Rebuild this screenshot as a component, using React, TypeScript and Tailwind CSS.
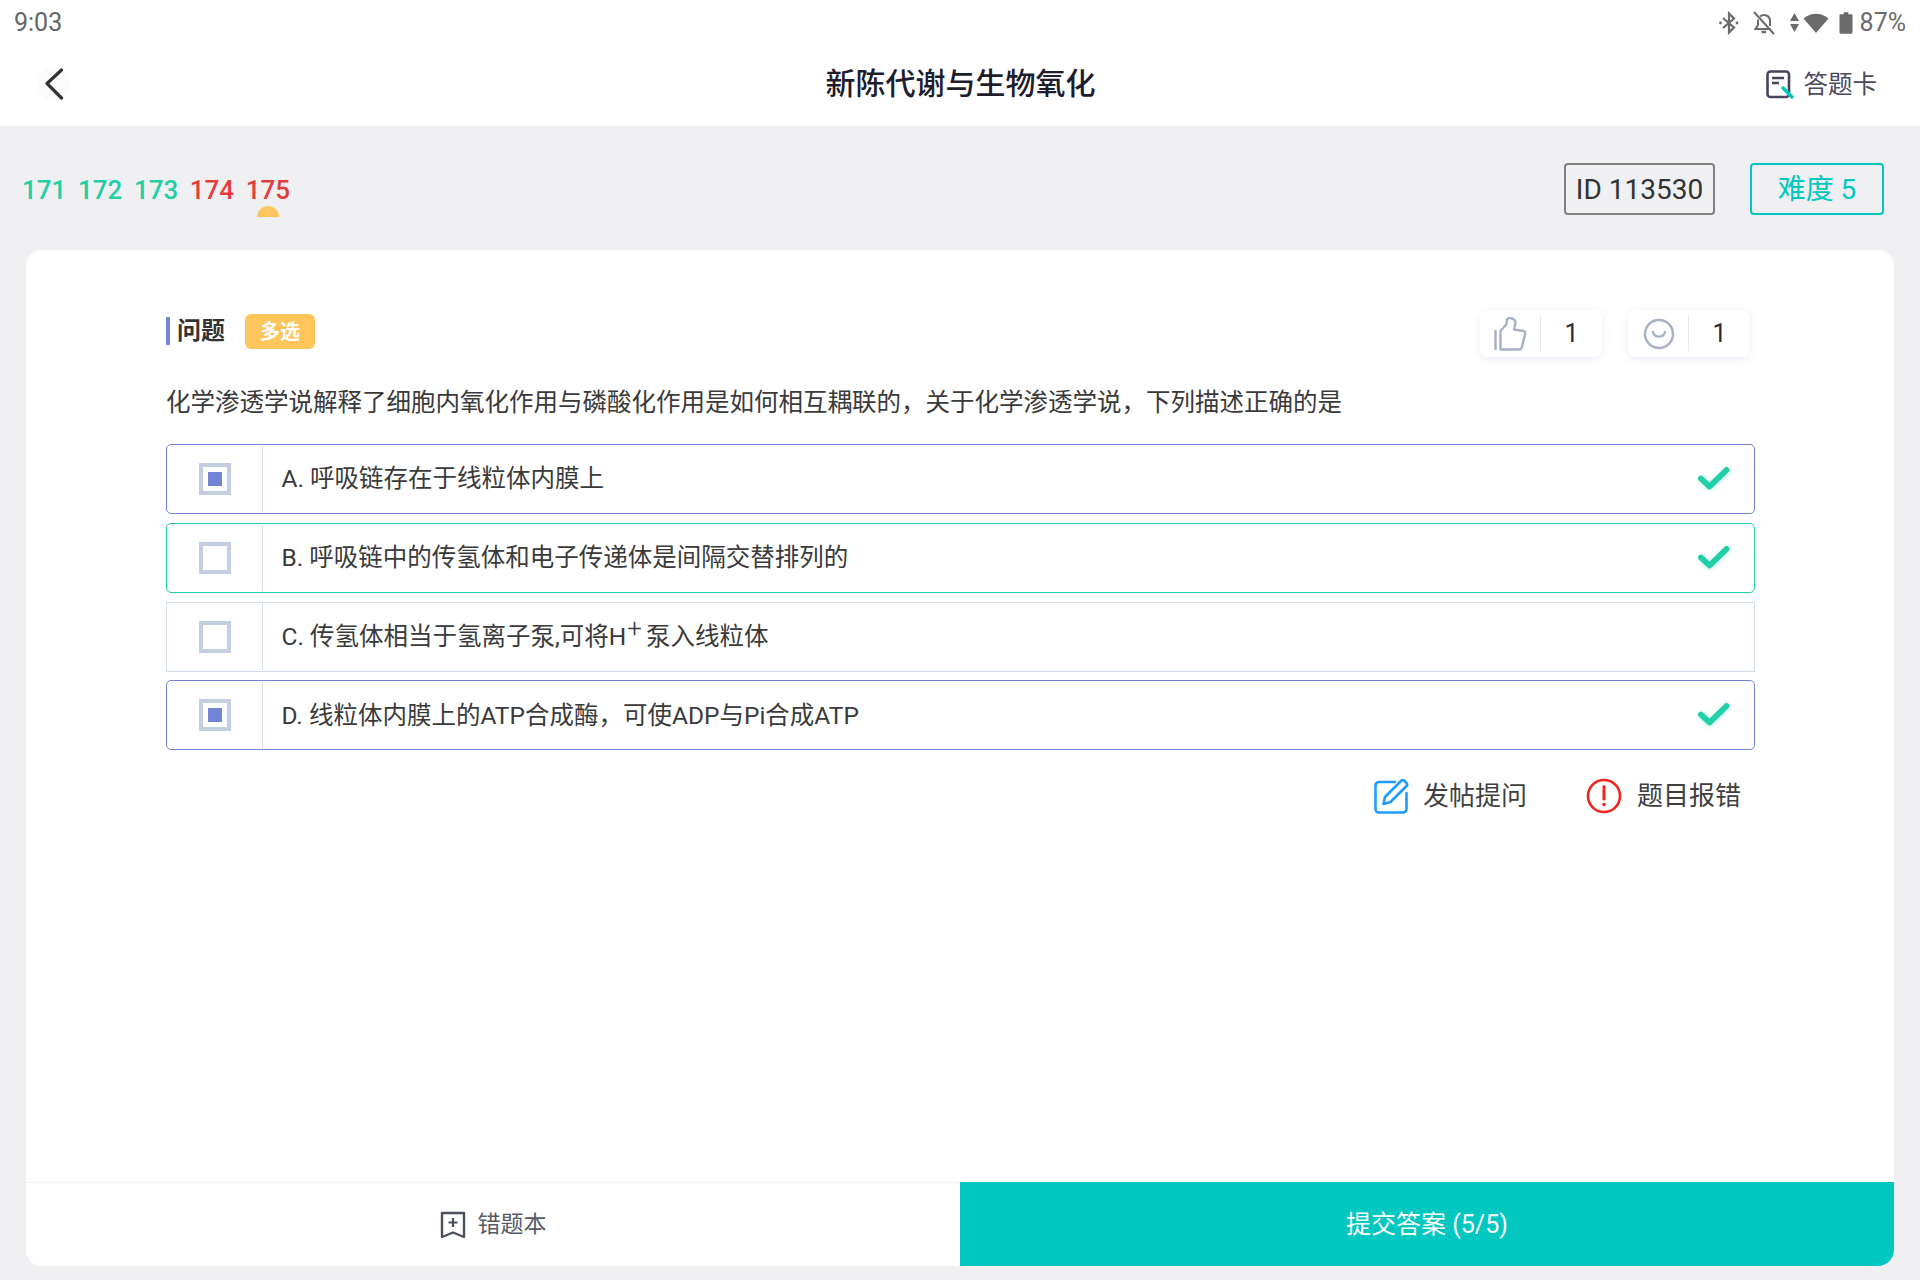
import React from "react";

const font = { fontFamily: 'Roboto, "Noto Sans CJK SC", sans-serif' };

function Check() {
  return (
    <svg width="34" height="28" viewBox="0 0 34 28" fill="none" className="drop-shadow-[0_1px_2px_rgba(31,207,166,0.35)]">
      <path d="M4 13.5 L12.5 21.5 L29.5 5" stroke="#1fcfa6" strokeWidth="5.8" strokeLinecap="round" strokeLinejoin="round" />
    </svg>
  );
}

type OptionProps = {
  border: string;
  selected?: boolean;
  correct?: boolean;
  rounded?: boolean;
  children: React.ReactNode;
};

function Option({ border, selected, correct, rounded = true, children }: OptionProps) {
  return (
    <div className={`flex h-[70px] items-stretch border-[1.5px] ${border} ${rounded ? "rounded-[5px]" : ""}`}>
      <div className="my-[1px] flex w-[96px] items-center justify-center border-r-[1.5px] border-[#d4deea]">
        <div className="flex h-[32px] w-[32px] items-center justify-center border-[4px] border-[#c3cfe0] bg-white">
          {selected && <div className="h-[14px] w-[14px] bg-[#7284d4]" />}
        </div>
      </div>
      <div className="flex flex-1 items-center pl-[18.5px] pt-[1px] text-[24.5px] text-[#3a3a3a]">{children}</div>
      {correct && (
        <div className="flex w-[57px] items-center">
          <Check />
        </div>
      )}
    </div>
  );
}

function Counter({ icon }: { icon: React.ReactNode }) {
  return (
    <div className="flex h-[47px] w-[122px] items-center rounded-[8px] bg-white shadow-[0_2px_10px_rgba(120,140,200,0.16)]">
      <div className="flex h-[35px] w-[61px] items-center justify-center border-r-[1.5px] border-[#e6e8ec] pl-[2px]">{icon}</div>
      <div className="flex-1 text-center text-[25px] leading-none text-[#2b2b2b]">1</div>
    </div>
  );
}

export default function App() {
  return (
    <div className="flex h-[1280px] w-[1920px] flex-col overflow-hidden bg-[#f0f0f3]" style={font}>
      {/* status bar */}
      <div className="flex h-[42px] items-center justify-between bg-white pl-[14px] pr-[14px] pt-[3px]">
        <span className="text-[25px] leading-none text-[#666666]">9:03</span>
        <div className="flex items-center text-[#6b6b6b]">
          <svg width="20" height="24" viewBox="0 0 20 24" fill="none" stroke="#6b6b6b" strokeWidth="2.2">
            <path d="M4 7 L15 16.5 L10 21.5 V2.5 L15 7.5 L4 17" />
            <circle cx="1.5" cy="12" r="1.4" fill="#6b6b6b" stroke="none" />
            <circle cx="18" cy="12" r="1.4" fill="#6b6b6b" stroke="none" />
          </svg>
          <svg className="ml-[14px]" width="22" height="24" viewBox="0 0 22 24" fill="none" stroke="#6b6b6b" strokeWidth="2">
            <path d="M1 1 L21 23" />
            <path d="M7 5.5 A6 6 0 0 1 17 10 V15 M5 8.5 V14 L2.5 18 H17.5" />
            <path d="M8.5 21 H13" strokeWidth="2.5" />
          </svg>
          <svg className="ml-[15px]" width="9" height="24" viewBox="0 0 9 24" fill="#6b6b6b">
            <path d="M4.5 2 L9 10 H0 Z M0 13 H9 L4.5 21 Z" />
          </svg>
          <svg className="ml-[4px]" width="26" height="22" viewBox="0 0 26 22" fill="#6b6b6b">
            <path d="M13 21 L0.5 6.5 A19 19 0 0 1 25.5 6.5 Z" />
          </svg>
          <svg className="ml-[10px]" width="14" height="24" viewBox="0 0 15 24" fill="#6b6b6b">
            <path d="M5 0.5 H10 V2.5 H13 A1.5 1.5 0 0 1 14.5 4 V22 A1.5 1.5 0 0 1 13 23.5 H2 A1.5 1.5 0 0 1 0.5 22 V4 A1.5 1.5 0 0 1 2 2.5 H5 Z" />
          </svg>
          <span className="ml-[7px] text-[25px] leading-none">87%</span>
        </div>
      </div>

      {/* nav bar */}
      <div className="flex h-[84px] items-center bg-white">
        <div className="flex flex-1 items-center pl-[37px]">
          <div className="flex h-[34px] w-[34px] items-center justify-center rounded-full bg-[#fbfbfb]">
            <svg width="20" height="32" viewBox="0 0 20 32" fill="none">
              <path d="M17.5 2 L3 15.5 L17.5 30" stroke="#333333" strokeWidth="3.2" strokeLinecap="round" strokeLinejoin="round" />
            </svg>
          </div>
        </div>
        <div className="pl-[7px] text-[30px] font-medium leading-none text-[#1d1d2e]">新陈代谢与生物氧化</div>
        <div className="flex flex-1 items-center justify-end pr-[43px]">
          <svg width="28" height="29" viewBox="0 0 28 29" fill="none">
            <rect x="1.5" y="1.5" width="21.5" height="25.5" rx="3" stroke="#45455e" strokeWidth="2.6" />
            <path d="M6 8 H18 M6 13 H13" stroke="#45455e" strokeWidth="2.4" />
            <path d="M17 18 L26 27" stroke="#00c8c0" strokeWidth="3.4" strokeLinecap="round" />
          </svg>
          <span className="ml-[10px] pt-[2px] text-[24.5px] leading-none text-[#4a4a60]">答题卡</span>
        </div>
      </div>

      {/* number strip */}
      <div className="flex h-[124px] items-center justify-between pl-[22px] pr-[36px] pt-[2px]">
        <div className="mt-[2px] flex gap-[11.6px] text-[26px] font-medium leading-none">
          <span className="text-[#1fcfa6]">171</span>
          <span className="text-[#1fcfa6]">172</span>
          <span className="text-[#1fcfa6]">173</span>
          <span className="text-[#e53c3c]">174</span>
          <span className="relative text-[#e53c3c]">
            175
            <span className="absolute left-[11px] top-[28.5px] h-[11px] w-[22px] rounded-t-full bg-[#fec55c]" />
          </span>
        </div>
        <div className="flex items-center gap-[35px]">
          <div className="flex h-[52px] w-[151px] items-center justify-center rounded-[4px] border-2 border-[#808080] pt-[2px] text-[28px] leading-none text-[#333333]">
            ID 113530
          </div>
          <div className="flex h-[52px] w-[134px] items-center justify-center rounded-[4px] border-2 border-[#00c8c0] pt-[2px] text-[28px] leading-none text-[#00c8c0]">
            难度 5
          </div>
        </div>
      </div>

      {/* card */}
      <div className="mx-[26px] flex h-[1016px] flex-col overflow-hidden rounded-[16px] bg-white">
        <div className="flex-1 pl-[140px] pr-[139px]">
          <div className="mt-[60px] flex h-[47px] items-center justify-between pr-[5px]">
            <div className="flex items-center pb-[5px]">
              <div className="h-[28px] w-[4px] bg-[#7284d4]" />
              <span className="ml-[7px] text-[24px] font-bold leading-none text-[#333333]">问题</span>
              <span className="ml-[20px] mt-[1px] flex h-[35px] w-[70px] items-center justify-center rounded-[6px] bg-[#fec55c] text-[20px] font-bold leading-none text-white">
                多选
              </span>
            </div>
            <div className="flex gap-[26px]">
              <Counter
                icon={
                  <svg width="34" height="34" viewBox="0 0 34 34" fill="none" stroke="#a7b1c3" strokeWidth="2.4" strokeLinejoin="round">
                    <path d="M1.5 13 V33" />
                    <path d="M6.5 32.5 V14 L12.3 7.5 L13 2.5 A3.5 3 0 0 1 17 1.2 C20 1.5 21.8 4 21.3 6.5 L20 12.5 L29.5 14 A2 2 0 0 1 31.3 16 L27.8 30.5 A2.5 2.5 0 0 1 25.5 32.5 Z" />
                  </svg>
                }
              />
              <Counter
                icon={
                  <svg width="32" height="32" viewBox="0 0 32 32" fill="none" stroke="#a7b1c3" strokeWidth="2.4" strokeLinecap="round">
                    <circle cx="16" cy="16" r="14" />
                    <path d="M10 14 A6.2 6.2 0 0 0 22 14" />
                  </svg>
                }
              />
            </div>
          </div>
          <div className="mt-[29px] h-[34px] text-[24.5px] leading-[34px] text-[#3a3a3a]">
            化学渗透学说解释了细胞内氧化作用与磷酸化作用是如何相互耦联的，关于化学渗透学说，下列描述正确的是
          </div>
          <div className="mt-[24px] flex flex-col gap-[8.8px]">
            <Option border="border-[#7284d4]" selected correct>
              A. 呼吸链存在于线粒体内膜上
            </Option>
            <Option border="border-[#1fcfa6]" correct>
              B. 呼吸链中的传氢体和电子传递体是间隔交替排列的
            </Option>
            <Option border="border-[#d4deea]" rounded={false}>
              <span>
                C. 传氢体相当于氢离子泵,可将H
                <sup className="top-[-8px] ml-[1px] mr-[4px] text-[26px] font-light leading-none">+</sup>
                泵入线粒体
              </span>
            </Option>
            <Option border="border-[#7284d4]" selected correct>
              D. 线粒体内膜上的ATP合成酶，可使ADP与Pi合成ATP
            </Option>
          </div>
          <div className="mt-[28px] flex items-center justify-end pr-[14px] text-[26px] leading-none text-[#3f3f3f]">
            <svg width="36" height="36" viewBox="0 0 36 36" fill="none" stroke="#1e9bff" strokeWidth="2.6" strokeLinecap="round" strokeLinejoin="round">
              <path d="M21 4 H5 A3.5 3.5 0 0 0 1.5 7.5 V31 A3.5 3.5 0 0 0 5 34.5 H29 A3.5 3.5 0 0 0 32.5 31 V15" />
              <path d="M9.5 26 L11 19 L27 3 A2.2 2.2 0 0 1 30 2.5 L32.5 5 A2.2 2.2 0 0 1 32.5 8 L16.5 24 Z" />
            </svg>
            <span className="ml-[13px]">发帖提问</span>
            <svg className="ml-[59px]" width="36" height="36" viewBox="0 0 36 36" fill="none" stroke="#f02323" strokeWidth="2.6">
              <circle cx="18" cy="18" r="16" />
              <path d="M18 8.5 V21" strokeLinecap="round" strokeWidth="3" />
              <circle cx="18" cy="26.5" r="1.8" fill="#f02323" stroke="none" />
            </svg>
            <span className="ml-[15px]">题目报错</span>
          </div>
        </div>
        <div className="flex h-[84px]">
          <div className="flex w-[934px] items-center justify-center border-t-[1.5px] border-[#edf3f7] text-[23px] leading-none text-[#555a66]">
            <svg width="26" height="28" viewBox="0 0 26 28" fill="none" stroke="#4a505c" strokeWidth="2.4" strokeLinejoin="round">
              <path d="M2 2 H24 V26 L13 21.5 L2 26 Z" />
              <path d="M13 7 V16 M8.5 11.5 H17.5" strokeWidth="2.2" />
            </svg>
            <span className="ml-[12px]">错题本</span>
          </div>
          <div className="flex flex-1 items-center justify-center bg-[#00c8c0] text-[25px] leading-none text-white">
            提交答案 (5/5)
          </div>
        </div>
      </div>
    </div>
  );
}
